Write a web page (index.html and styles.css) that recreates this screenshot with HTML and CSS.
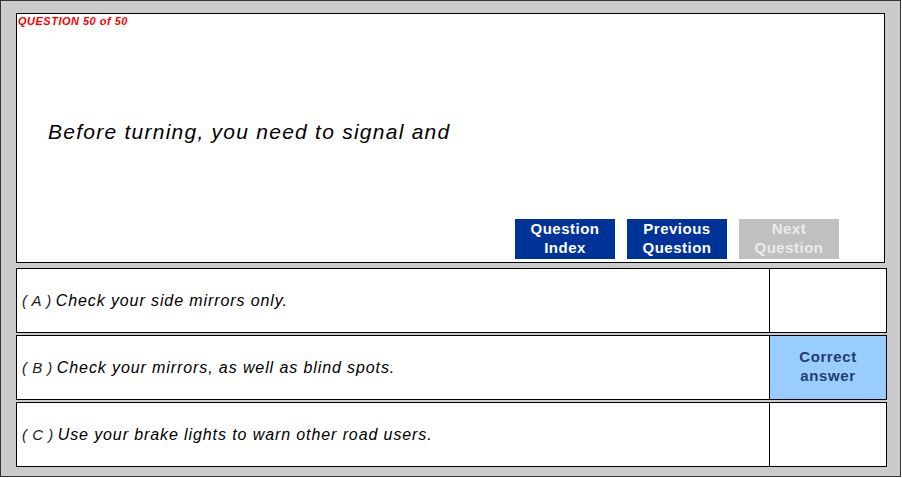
FILE: index.html
```html
<!DOCTYPE html>
<html lang="en">
<head>
  <meta charset="UTF-8">
  <title>Question 50 of 50</title>
  <link rel="stylesheet" href="styles.css">
</head>
<body>
  <div class="frame">
    <div class="question-box">
      <div class="counter">QUESTION 50 of 50</div>
      <div class="question-text">Before turning, you need to signal and</div>
      <div class="nav">
        <button class="nav-btn">Question<br>Index</button>
        <button class="nav-btn">Previous<br>Question</button>
        <button class="nav-btn disabled">Next<br>Question</button>
      </div>
    </div>

    <div class="options">
      <div class="option">
        <div class="option-text"><span class="letter">( A )</span> Check your side mirrors only.</div>
        <div class="result"></div>
      </div>
      <div class="option">
        <div class="option-text"><span class="letter">( B )</span> Check your mirrors, as well as blind spots.</div>
        <div class="result correct">Correct<br>answer</div>
      </div>
      <div class="option">
        <div class="option-text"><span class="letter">( C )</span> Use your brake lights to warn other road users.</div>
        <div class="result"></div>
      </div>
    </div>
  </div>
</body>
</html>
```

FILE: styles.css
```css
* {
  box-sizing: border-box;
}

body {
  margin: 0;
  font-family: "Liberation Sans", Arial, sans-serif;
  background-color: #fff;
}

.frame {
  width: 901px;
  height: 477px;
  border: 1px solid #333;
  background-color: #cbcbcb;
  padding: 12px 0 0 15px;
}

.question-box {
  width: 869px;
  height: 250px;
  border: 1px solid #000;
  background-color: #fff;
  display: flex;
  flex-direction: column;
}

.counter {
  color: #ff0000;
  font-size: 11px;
  font-weight: bold;
  font-style: italic;
  letter-spacing: 0.5px;
  padding: 1px 0 0 1px;
  line-height: 13px;
}

.question-text {
  font-size: 21px;
  font-style: italic;
  letter-spacing: 1.25px;
  color: #000;
  padding: 92px 0 0 31px;
  line-height: 24px;
}

.nav {
  margin-top: auto;
  display: flex;
  justify-content: flex-end;
  gap: 12px;
  padding: 0 45px 3px 0;
}

.nav-btn {
  width: 100px;
  height: 40px;
  border: none;
  margin: 0;
  padding: 0 0 3px;
  background-color: #003399;
  color: #fff;
  font-family: "Liberation Sans", Arial, sans-serif;
  font-size: 15px;
  font-weight: bold;
  letter-spacing: 0.5px;
  line-height: 19px;
}

.nav-btn.disabled {
  background-color: #c0c0c0;
  color: #ebebeb;
}

.options {
  margin-top: 5px;
  width: 871px;
  display: flex;
  flex-direction: column;
  gap: 2px;
}

.option {
  height: 65px;
  border: 1px solid #000;
  background-color: #fff;
  display: flex;
}

.option-text {
  flex: 1;
  display: flex;
  align-items: center;
  padding-left: 5px;
  font-size: 16px;
  font-style: italic;
  letter-spacing: 0.9px;
  color: #000;
}

.letter {
  font-size: 15px;
  color: #222;
  margin-right: 4px;
  letter-spacing: 0.5px;
}

.result {
  width: 117px;
  border-left: 1px solid #000;
  display: flex;
  align-items: center;
  justify-content: center;
  text-align: center;
  padding-bottom: 3px;
  font-size: 15px;
  font-weight: bold;
  letter-spacing: 0.6px;
  line-height: 19px;
  color: #1f3e6c;
}

.result.correct {
  background-color: #99ccff;
}
```
